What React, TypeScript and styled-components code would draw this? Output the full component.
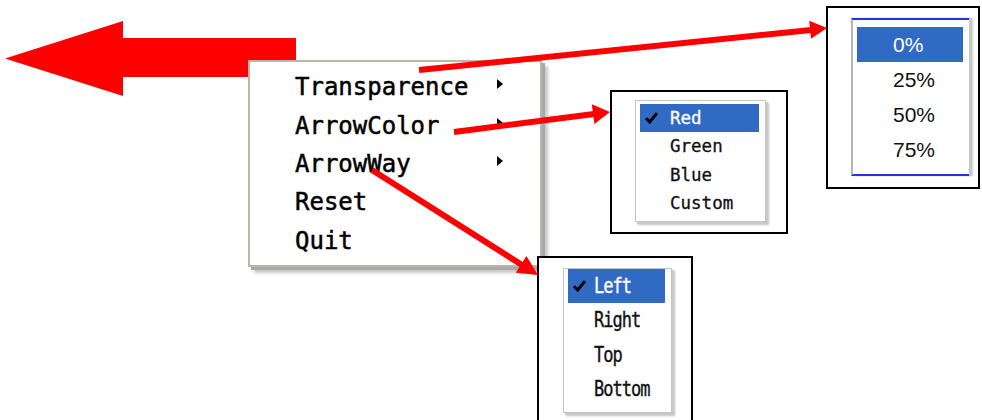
import React from 'react';
import styled, { createGlobalStyle } from 'styled-components';

const Global = createGlobalStyle`
  html, body { margin: 0; padding: 0; background: #fff; overflow: hidden; }
`;

const Canvas = styled.div`
  position: relative;
  width: 982px;
  height: 420px;
  overflow: hidden;
  background: #fff;
`;

const Layer = styled.svg<{ $z: number }>`
  position: absolute;
  left: 0;
  top: 0;
  width: 982px;
  height: 420px;
  z-index: ${(p) => p.$z};
  pointer-events: none;
`;

/* ---------- main context menu ---------- */
const ContextMenu = styled.div`
  position: absolute;
  left: 248px;
  top: 60px;
  width: 294px;
  height: 207px;
  box-sizing: border-box;
  z-index: 1;
  background: #fff;
  border: 2px solid #b9b5aa;
  box-shadow: 3px 3px 0 #a9a9a9, 6px 6px 3px rgba(0, 0, 0, 0.22);
  padding: 6px 0 5px 0;
  display: flex;
  flex-direction: column;
`;

const ContextItem = styled.div`
  display: flex;
  align-items: center;
  height: 38.5px;
  padding-left: 45px;
  padding-right: 37px;
  font-family: 'DejaVu Sans Mono', 'Liberation Mono', monospace;
  font-size: 24px;
  color: #000;
  -webkit-text-stroke: 0.5px #000;
`;

const Label = styled.span`
  flex: 1;
  white-space: nowrap;
`;

const SubArrow = styled.span`
  width: 0;
  height: 0;
  border-left: 6px solid #000;
  border-top: 5.5px solid transparent;
  border-bottom: 5.5px solid transparent;
  margin-top: -6px;
`;

/* ---------- annotation frames ---------- */
const Frame = styled.div<{ $x: number; $y: number; $w: number; $h: number; $pl: number; $pt: number }>`
  position: absolute;
  left: ${(p) => p.$x}px;
  top: ${(p) => p.$y}px;
  width: ${(p) => p.$w}px;
  height: ${(p) => p.$h}px;
  box-sizing: border-box;
  border: 2px solid #000;
  background: #fff;
  z-index: 2;
  padding: ${(p) => `${p.$pt}px 0 0 ${p.$pl}px`};
  display: flex;
  align-items: flex-start;
`;

const PercentMenu = styled.div`
  width: 118px;
  height: 158px;
  box-sizing: border-box;
  background: #fff;
  border-top: 2px solid #1d35e6;
  border-bottom: 2px solid #1d35e6;
  border-left: 2px solid #b4b4b4;
  box-shadow: 3px 0 0 #c8c8c8, 4px 0 2px rgba(0, 0, 0, 0.2);
  padding: 7px 6px 7px 4px;
  display: flex;
  flex-direction: column;
`;

const PercentItem = styled.div<{ $sel?: boolean }>`
  height: 35px;
  display: flex;
  align-items: center;
  padding-left: 36px;
  font-family: 'Liberation Sans', Arial, sans-serif;
  font-size: 21px;
  color: ${(p) => (p.$sel ? '#fff' : '#111')};
  background: ${(p) => (p.$sel ? '#316ac5' : 'transparent')};
`;

const CheckMenu = styled.div<{ $w: number; $h: number; $pt: number }>`
  width: ${(p) => p.$w}px;
  height: ${(p) => p.$h}px;
  box-sizing: border-box;
  background: #fff;
  border: 1px solid #c4c4c4;
  box-shadow: 2px 2px 0 #c9c9c9, 3px 3px 2px rgba(0, 0, 0, 0.25);
  padding: ${(p) => p.$pt}px 6px 4px 4px;
  display: flex;
  flex-direction: column;
`;

const CheckItem = styled.div<{ $sel?: boolean; $h: number; $fs: number; $slot: number; $ls: number; $sy: number }>`
  height: ${(p) => p.$h}px;
  display: flex;
  align-items: center;
  font-family: 'DejaVu Sans Mono', 'Liberation Mono', monospace;
  font-size: ${(p) => p.$fs}px;
  letter-spacing: ${(p) => p.$ls}px;
  color: ${(p) => (p.$sel ? '#fff' : '#111')};
  background: ${(p) => (p.$sel ? '#316ac5' : 'transparent')};
  -webkit-text-stroke: 0.3px currentColor;
  & > .slot {
    width: ${(p) => p.$slot}px;
    flex: none;
    display: flex;
    align-items: center;
    padding-left: 5px;
    box-sizing: border-box;
  }
  & > .text {
    display: inline-block;
    transform: scaleY(${(p) => p.$sy});
  }
`;

const Check = () => (
  <svg width="13" height="12" viewBox="0 0 13 12">
    <path d="M1 6.2 L4.6 10 L12 1.2" fill="none" stroke="#000" strokeWidth="3" />
  </svg>
);

type CI = { label: string; sel?: boolean };

const colors: CI[] = [{ label: 'Red', sel: true }, { label: 'Green' }, { label: 'Blue' }, { label: 'Custom' }];
const ways: CI[] = [{ label: 'Left', sel: true }, { label: 'Right' }, { label: 'Top' }, { label: 'Bottom' }];

export default function App() {
  return (
    <Canvas>
      <Global />
      <Layer $z={0} viewBox="0 0 982 420">
        <polygon points="5,58.5 123,21 123,38 296,38 296,77 123,77 123,96" fill="#ff0000" />
      </Layer>

      <ContextMenu>
        <ContextItem><Label>Transparence</Label><SubArrow /></ContextItem>
        <ContextItem><Label>ArrowColor</Label><SubArrow /></ContextItem>
        <ContextItem><Label>ArrowWay</Label><SubArrow /></ContextItem>
        <ContextItem><Label>Reset</Label></ContextItem>
        <ContextItem><Label>Quit</Label></ContextItem>
      </ContextMenu>

      <Frame $x={826} $y={6} $w={154} $h={183} $pl={23} $pt={10}>
        <PercentMenu>
          <PercentItem $sel>0%</PercentItem>
          <PercentItem>25%</PercentItem>
          <PercentItem>50%</PercentItem>
          <PercentItem>75%</PercentItem>
        </PercentMenu>
      </Frame>

      <Frame $x={610} $y={90} $w={178} $h={144} $pl={23} $pt={8}>
        <CheckMenu $w={131} $h={122} $pt={3}>
          {colors.map((c) => (
            <CheckItem key={c.label} $sel={c.sel} $h={28.5} $fs={17.5} $slot={30} $ls={0} $sy={1.05}>
              <span className="slot">{c.sel && <Check />}</span>
              <span className="text">{c.label}</span>
            </CheckItem>
          ))}
        </CheckMenu>
      </Frame>

      <Frame $x={537} $y={256} $w={156} $h={200} $pl={24} $pt={10}>
        <CheckMenu $w={109} $h={145} $pt={0}>
          {ways.map((c) => (
            <CheckItem key={c.label} $sel={c.sel} $h={34.3} $fs={17} $slot={26} $ls={-1} $sy={1.22}>
              <span className="slot">{c.sel && <Check />}</span>
              <span className="text">{c.label}</span>
            </CheckItem>
          ))}
        </CheckMenu>
      </Frame>

      <Layer $z={3} viewBox="0 0 982 420">
        <g fill="#ff0000" stroke="#ff0000">
          <line x1="419" y1="70" x2="811" y2="30" strokeWidth="6" />
          <polygon points="827,28 811,38.7 809.2,20.7" strokeWidth="0" />
          <line x1="454" y1="132" x2="594" y2="114" strokeWidth="6" />
          <polygon points="610,112 594.4,124.1 591.8,104.3" strokeWidth="0" />
          <line x1="372" y1="170" x2="522" y2="265" strokeWidth="6" />
          <polygon points="538,275 515.8,272.8 526.4,255.9" strokeWidth="0" />
        </g>
      </Layer>
    </Canvas>
  );
}
